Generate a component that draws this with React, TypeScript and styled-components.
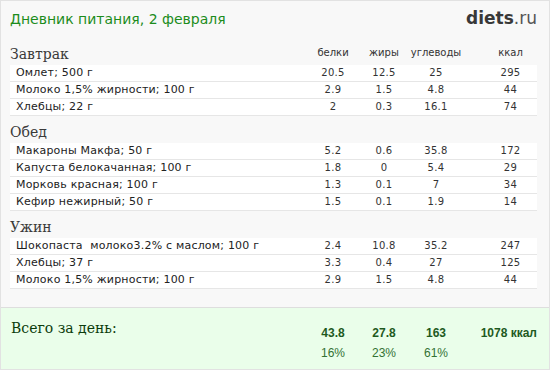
import React from 'react';
import styled, { createGlobalStyle } from 'styled-components';

const GlobalStyle = createGlobalStyle`
  html, body {
    margin: 0;
    padding: 0;
    background: #ffffff;
  }
`;

const Page = styled.div`
  width: 550px;
  height: 370px;
  box-sizing: border-box;
  border: 1px solid #e2e2e2;
  background: #f8f8f8;
  display: flex;
  flex-direction: column;
  font-family: 'DejaVu Sans', Verdana, sans-serif;
  color: #333;
`;

const Content = styled.div`
  padding: 0 12px 0 9px;
`;

const Header = styled.div`
  display: flex;
  justify-content: space-between;
  align-items: baseline;
  padding-top: 7px;
  height: 35px;
`;

const Title = styled.div`
  font-size: 14px;
  line-height: 18px;
  color: #1c8c1c;
`;

const Logo = styled.div`
  font-size: 17px;
  line-height: 20px;
  color: #555;
  b {
    color: #383838;
    font-weight: bold;
  }
`;

const Meal = styled.div`
  margin-bottom: 5px;
`;

const Grid = styled.div`
  display: grid;
  grid-template-columns: 1fr 54px 48px 56px 73px;
`;

const MealHead = styled(Grid)`
  height: 22px;
  align-items: end;
`;

const MealName = styled.div`
  font-family: 'DejaVu Serif', Georgia, serif;
  font-size: 14px;
  line-height: 18px;
  color: #3a3a3a;
  padding-bottom: 2px;
`;

const ColHead = styled.div<{ $kcal?: boolean }>`
  font-size: 10px;
  line-height: 12px;
  text-align: center;
  padding-bottom: 6px;
  padding-left: ${p => (p.$kcal ? '20px' : '0')};
`;

const Row = styled(Grid)`
  height: 16px;
  align-items: center;
  background: #fff;
  border-bottom: 1px solid #e6e6e6;
`;

const FoodName = styled.div`
  font-size: 11px;
  line-height: 16px;
  letter-spacing: 0.2px;
  padding-left: 6px;
  color: #222;
  white-space: pre;
`;

const Num = styled.div<{ $kcal?: boolean }>`
  font-size: 10px;
  line-height: 16px;
  letter-spacing: 0.3px;
  text-align: center;
  padding-left: ${p => (p.$kcal ? '20px' : '0')};
`;

const Totals = styled.div`
  margin-top: auto;
  height: 62px;
  box-sizing: border-box;
  border-top: 1px solid #dedede;
  background: #eafeea;
  padding: 11px 12px 0 9px;
`;

const TotalsGrid = styled(Grid)`
  grid-template-rows: auto auto;
  font-family: 'Liberation Sans', Arial, sans-serif;
  font-size: 12px;
`;

const TotalLabel = styled.div`
  font-family: 'DejaVu Serif', Georgia, serif;
  font-size: 14px;
  line-height: 18px;
  color: #0c3c0c;
  padding-left: 1px;
`;

const TotalNum = styled.div<{ $kcal?: boolean }>`
  font-weight: bold;
  line-height: 14px;
  padding-top: 7px;
  color: #1e5a1e;
  text-align: ${p => (p.$kcal ? 'right' : 'center')};
`;

const Percent = styled.div`
  line-height: 14px;
  margin-top: 6px;
  color: #347234;
  text-align: center;
`;

type Food = [string, string, string, string, string];

const meals: { name: string; foods: Food[] }[] = [
  {
    name: 'Завтрак',
    foods: [
      ['Омлет; 500 г', '20.5', '12.5', '25', '295'],
      ['Молоко 1,5% жирности; 100 г', '2.9', '1.5', '4.8', '44'],
      ['Хлебцы; 22 г', '2', '0.3', '16.1', '74'],
    ],
  },
  {
    name: 'Обед',
    foods: [
      ['Макароны Макфа; 50 г', '5.2', '0.6', '35.8', '172'],
      ['Капуста белокачанная; 100 г', '1.8', '0', '5.4', '29'],
      ['Морковь красная; 100 г', '1.3', '0.1', '7', '34'],
      ['Кефир нежирный; 50 г', '1.5', '0.1', '1.9', '14'],
    ],
  },
  {
    name: 'Ужин',
    foods: [
      ['Шокопаста  молоко3.2% с маслом; 100 г', '2.4', '10.8', '35.2', '247'],
      ['Хлебцы; 37 г', '3.3', '0.4', '27', '125'],
      ['Молоко 1,5% жирности; 100 г', '2.9', '1.5', '4.8', '44'],
    ],
  },
];

const App: React.FC = () => {
  return (
    <>
      <GlobalStyle />
      <Page>
        <Content>
          <Header>
            <Title>Дневник питания, 2 февраля</Title>
            <Logo>
              <b>diets</b>.ru
            </Logo>
          </Header>

          {meals.map((meal, mi) => (
            <Meal key={meal.name}>
              <MealHead>
                <MealName>{meal.name}</MealName>
                {mi === 0 && (
                  <>
                    <ColHead>белки</ColHead>
                    <ColHead>жиры</ColHead>
                    <ColHead>углеводы</ColHead>
                    <ColHead $kcal>ккал</ColHead>
                  </>
                )}
              </MealHead>
              {meal.foods.map((f, i) => (
                <Row key={i}>
                  <FoodName>{f[0]}</FoodName>
                  <Num>{f[1]}</Num>
                  <Num>{f[2]}</Num>
                  <Num>{f[3]}</Num>
                  <Num $kcal>{f[4]}</Num>
                </Row>
              ))}
            </Meal>
          ))}
        </Content>

        <Totals>
          <TotalsGrid>
            <TotalLabel>Всего за день:</TotalLabel>
            <TotalNum>43.8</TotalNum>
            <TotalNum>27.8</TotalNum>
            <TotalNum>163</TotalNum>
            <TotalNum $kcal>1078 ккал</TotalNum>
            <div />
            <Percent>16%</Percent>
            <Percent>23%</Percent>
            <Percent>61%</Percent>
          </TotalsGrid>
        </Totals>
      </Page>
    </>
  );
};

export default App;
